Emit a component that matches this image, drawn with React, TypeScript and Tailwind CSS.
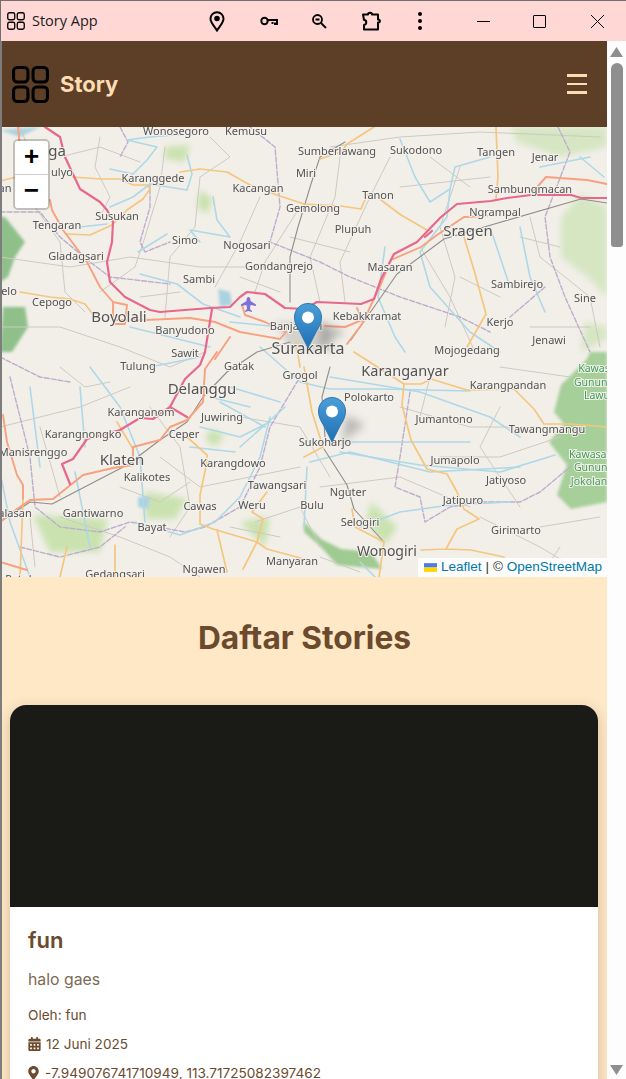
import React from "react";
import { FaCalendarAlt, FaMapMarkerAlt } from "react-icons/fa";

type L = [string, number, number, number?, string?];
const labels: L[] = [
  ["Wonosegoro", 176, 4], ["Kemusu", 246, 4], ["Sumberlawang", 337, 24], ["Sukodono", 416, 23], ["Tangen", 496, 25], ["Jenar", 545, 30],
  ["Karanggede", 153, 51], ["Kacangan", 258, 61], ["Miri", 306, 46], ["Tanon", 378, 68], ["Sambungmacan", 530, 62], ["Gemolong", 313, 81],
  ["Ngrampal", 495, 85], ["Sragen", 468, 104, 15], ["Susukan", 117, 89], ["Tengaran", 57, 98], ["Simo", 185, 113], ["Nogosari", 247, 118],
  ["Plupuh", 353, 102], ["Gladagsari", 76, 129], ["Gondangrejo", 279, 139], ["Masaran", 390, 140], ["Sambi", 199, 152], ["Sambirejo", 517, 157],
  ["Sine", 585, 171], ["elo", 9, 164], ["Cepogo", 52, 175], ["Boyolali", 119, 190, 15], ["Banyudono", 185, 203], ["Kebakkramat", 367, 189],
  ["Kerjo", 500, 195], ["Jenawi", 549, 213], ["Banjarsari", 296, 199], ["Surakarta", 308, 221, 16], ["Mojogedang", 467, 223], ["Sawit", 185, 226],
  ["Tulung", 138, 239], ["Gatak", 239, 239], ["Grogol", 300, 248], ["Karanganyar", 405, 244, 14.5], ["Karangpandan", 508, 258], ["Delanggu", 202, 262, 15],
  ["Polokarto", 369, 270], ["Karanganom", 141, 285], ["Juwiring", 222, 290], ["Jumantono", 444, 292], ["Tawangmangu", 547, 302], ["Karangnongko", 83, 307],
  ["Ceper", 184, 307], ["Manisrenggo", 33, 325], ["Klaten", 122, 333, 15], ["Karangdowo", 233, 336], ["Jumapolo", 455, 333], ["Sukoharjo", 325, 315],
  ["Kalikotes", 147, 350], ["Jatiyoso", 506, 353], ["Tawangsari", 277, 358], ["Nguter", 348, 365], ["Jatipuro", 463, 373], ["Cawas", 200, 379],
  ["Weru", 252, 378], ["Bulu", 312, 378], ["Gantiwarno", 93, 386], ["alasan", 15, 386], ["Selogiri", 360, 395], ["Bayat", 152, 400], ["Girimarto", 516, 403],
  ["Wonogiri", 387, 424, 14], ["Ngawen", 204, 442], ["Manyaran", 292, 434], ["Gedangsari", 115, 447], ["Patuk", 20, 452], ["ga", 57, 24, 15], ["ulyo", 62, 45], ["an", 5, 61],
  ["Kawas", 594, 241, 10.500, "#3f9a55"], ["Gunung", 594, 255, 10.500, "#3f9a55"], ["Lawu", 597, 268, 10.500, "#3f9a55"], ["Kawasan", 591, 327, 10.500, "#3f9a55"], ["Gunung", 594, 340, 10.500, "#3f9a55"], ["Jokolan", 589, 354, 10.500, "#3f9a55"],
];

const pink = [
  "M45 0 L60 10 L65 30 L80 62 L100 75 L107 83 L113 95 L112 115 L107 135 L110 155 L125 170 L150 183 L160 185 L210 181 L230 180 L240 170 L247 165 L265 167 L285 181 L304 182 L317 175 L361 177 L374 172 L381 152 L394 127 L417 115 L441 90 L457 77 L491 74 L507 71 L531 68 L571 68 L581 71 L607 71",
  "M212 182 L205 225 L200 238 L185 252 L170 280 L153 292 L140 291 L120 303 L87 312 L73 332 L62 337 L70 357",
  "M170 280 L187 290",
  "M425 110 L432 104",
];
const salmon = [
  "M18 0 L20 20 M50 73 L52 83 L63 103 L87 135 L100 160 L113 175 L127 178 L125 197 L113 197 L113 175",
  "M113 193 L145 193 L190 191 L215 195 L240 205 L280 212 L286 205 L265 195 L245 188 L242 178",
  "M217 225 L205 242 L203 275 L187 293 L170 300 L160 313 L133 320 L133 338 L113 341 L83 348 L53 372 L30 373 L17 382 L0 395",
  "M347 217 L362 197 L381 157 L391 133 L421 120 L437 108 L464 90 L487 89",
  "M531 67 L546 50 L587 53 L607 57",
  "M3 288 L7 315 L17 348 L23 358 L23 372 M0 435 L27 443",
  "M325 199 L345 200 L362 193 L357 181 M230 210 L215 232",
];
const lightOrange = [
  "M0 54 L25 48 M73 50 L100 52 L120 52 L133 58 L147 58 L150 62 L143 72 L127 83 L112 98 L90 108 L67 107",
  "M180 45 L200 42 L227 45 L250 58 L277 68 L304 77 L341 79 L361 82 L367 68",
  "M381 73 L401 88 L427 103 M374 0 L347 17 L341 25 L320 32",
  "M496 0 L498 50 L496 72 M464 110 L474 143 L486 187 L467 220",
  "M354 225 L404 257 L421 257 L431 252 L467 263 L514 262 L534 282 L544 297 L571 297 L607 300",
  "M404 257 L402 278 L411 313 L427 342 L447 347 L457 365 L464 382 L479 392 L457 402 L446 422 L421 423 M446 422 L471 423 L504 430",
  "M207 335 L200 368 L200 397 L213 402 L257 415 L243 442 M257 415 L267 422 L304 432 M257 415 L263 392 L252 385 L267 365",
  "M117 295 L133 322 M187 310 L207 328 L207 335 M217 403 L227 445 M23 373 L20 450 M115 418 L115 450 M67 420 L60 450",
  "M304 240 L312 285 L323 320 L304 330 M352 382 L355 400 L384 415 L379 450 M296 215 L300 240",
  "M20 165 L50 170 L70 172 L85 177 L95 190",
];
const rail = [
  "M351 213 L397 147 L444 112 L491 98 L581 72 L607 76",
  "M0 395 L30 375 L52 377 L100 352 L127 338 L160 313 L187 295 L203 270 L227 245 L257 225 L290 215",
  "M324 322 L347 358 L354 382 L384 415 M290 175 L290 130 L298 100 L311 57 L320 30 L345 15",
  "M325 310 L322 270 L330 240",
];
const river = [
  "M110 42 L133 47 L147 33 L157 20 L127 13 L150 10 L187 7", "M110 80 L133 70 L150 57 L187 63 L192 47 L187 28", "M80 100 L107 97",
  "M167 107 L138 125", "M213 70 L217 93 L230 110 L190 103 L200 115", "M140 147 L177 157 L203 177 L240 190", "M130 200 L170 210 L210 220",
  "M400 12 L415 50 L430 75 L450 62 L455 40 L490 30", "M450 62 L447 90 L420 125 L430 160 L470 205 L500 225", "M385 120 L378 170 L395 210 L405 225",
  "M490 100 L510 160 M520 100 L530 150 L545 185", "M90 240 L120 280 L140 330 L145 395 M80 260 L85 320 M200 230 L150 240",
  "M40 340 L30 260 M75 345 L90 420", "M0 345 L10 395 L30 450",
  "M135 395 L180 408 L215 395 L240 370 L260 330 L270 290", "M230 260 L280 275 M220 275 L265 300 M240 320 L285 280", "M260 220 L300 255 L330 262 L380 262 L470 264",
  "M350 315 L440 315 L470 315 M340 325 L420 338 L500 345 L555 328", "M310 335 L350 325 L430 345 L520 340", "M330 250 L420 265 L490 290 L520 310", "M307 340 L304 400 M360 400 L400 385 L450 378 L510 375",
  "M580 30 L604 50 M540 40 L590 30", "M360 435 L375 450", "M200 300 L240 310 L270 295 M210 270 L250 280 M190 320 L235 325", "M230 195 L280 200 L320 190",
];
const purple = [
  "M120 0 L128 15 L120 30 M150 55 L150 80 L140 115 L145 125 L170 115", "M0 85 L40 85 L60 110 L90 135 L110 150 L170 157", "M250 0 L275 20 L280 80 L270 115 L320 135 L350 150 L400 170 L460 190 L490 205",
  "M558 0 L570 25 L545 90 L550 130 L565 170 L590 225 M545 160 L510 190", "M10 250 L30 330 L35 380 L60 400 L100 405 L130 395 L185 405 L205 400 L240 380 L260 340 L270 300 L300 250",
  "M0 230 L40 250 L70 255 M20 420 L60 430 L100 420 L125 400", "M410 265 L400 330 L395 360 L420 370 L425 395 L450 380 L480 375 L520 375 L540 365 L570 340",
];
const grey = [
  "M20 0 L40 50 L35 80 L60 115 L65 165 L85 185 M100 10 L95 40 L110 70 L100 90 M165 20 L160 60 L145 110 L135 140 L100 165",
  "M200 50 L195 100 L170 130 L165 190 M260 70 L240 115 L215 160 M300 80 L265 135 L255 165 M340 30 L335 70 L310 130 L320 175",
  "M390 30 L370 70 L340 135 L345 175 M460 40 L440 100 L455 150 L445 200 M530 90 L540 130 L590 170 L600 220 M420 120 L450 170 L475 225",
  "M0 200 L60 200 L120 220 L170 240 L205 225 M0 300 L40 290 L80 280 L130 260 M160 330 L200 360 L250 350 L300 340 M60 390 L120 410 L170 430 L200 450",
  "M400 280 L470 300 L540 300 M440 330 L500 330 L560 310 M320 360 L400 350 L470 380 M480 390 L540 420 L590 450 M240 290 L300 300 L330 350 M530 200 L590 200 M330 20 L400 10 L480 5 L600 10",
  "M0 130 L70 140 L130 130 L200 140 L260 140 M400 60 L490 50 M150 280 L180 320 L190 380 L170 410 M40 300 L60 370 M255 395 L300 380 L320 420 M500 240 L570 250 M540 400 L600 390",
  "M60 240 L85 260 L110 255 M120 360 L160 375 L190 355 M30 390 L35 440 M230 400 L280 410 M320 430 L360 445 M420 290 L430 250 M500 280 L480 320 L520 380 M560 420 L540 450",
  "M60 30 L100 20 L140 35 M210 10 L230 30 L200 50 M290 110 L350 125 M430 30 L470 60 M520 110 L560 120 M460 150 L500 170 M140 170 L180 165 M240 150 L280 165",
];

function Pin({ x, y }: { x: number; y: number }) {
  return (
    <g transform={`translate(${x} ${y})`}>
      <path d="M14 .5C6.500.5.5 6.500.5 14c0 6 2.500 10 5.500 15L14 45l8-16c3-5 5.500-9 5.500-15C27.500 6.500 21.500.5 14 .5Z" fill="url(#pinGrad)" stroke="#2f77ad" strokeWidth="1" />
      <circle cx="14" cy="14.500" r="6" fill="#fff" />
    </g>
  );
}

function GridIcon({ size, sw }: { size: number; sw: number }) {
  return (
    <svg width={size} height={size} viewBox="0 0 36 36" fill="none" stroke="currentColor" strokeWidth={sw} className="shrink-0">
      <rect x="1.500" y="1.500" width="14" height="14" rx="3.500" />
      <rect x="20.500" y="1.500" width="14" height="14" rx="3.500" />
      <rect x="1.500" y="20.500" width="14" height="14" rx="3.500" />
      <rect x="20.500" y="20.500" width="14" height="14" rx="3.500" />
    </svg>
  );
}

function MapArt() {
  return (
    <svg viewBox="0 0 607 450" width="607" height="450" className="block">
      <defs>
        <linearGradient id="pinGrad" x1="0" y1="0" x2="0" y2="1">
          <stop offset="0" stopColor="#4a9fd8" />
          <stop offset="1" stopColor="#1f6fb4" />
        </linearGradient>
        <filter id="soft"><feGaussianBlur stdDeviation="0.45" /></filter>
        <filter id="softer"><feGaussianBlur stdDeviation="1.500" /></filter>
        <filter id="softest"><feGaussianBlur stdDeviation="3" /></filter>
        <filter id="shadow"><feGaussianBlur stdDeviation="4" /></filter>
      </defs>
      <rect width="607" height="450" fill="#f2efe9" />
      <g filter="url(#softest)">
        <path d="M561 90 L581 67 L607 80 L607 170 L587 150 L561 130Z M511 0 L607 0 L607 20 L560 30 L517 15Z M581 225 L607 212 L607 200 L585 195Z" fill="#d6e6c2" />
        <path d="M200 63 L213 72 L207 87 L197 80Z M165 20 L190 18 L185 35 L165 32Z M145 365 L187 372 L175 392 L145 392Z M33 388 L107 392 L100 425 L50 425Z M240 395 L270 390 L265 420Z M371 375 L397 400 L385 418 L366 395Z M210 302 L225 308 L215 320 L205 312Z" fill="#c9e2af" />
        <path d="M275 195 L325 195 L335 225 L290 222Z" fill="#d4d2cd" />
      </g>
      <g filter="url(#softer)">
        <path d="M5 90 L25 115 L15 130 L8 150 L0 155 L0 90Z M3 180 L25 180 L28 200 L12 225 L0 225Z" fill="#8fc08a" />
        <path d="M590 225 L607 225 L607 375 L571 382 L557 368 L567 338 L549 315 L564 297 L554 285 L561 258 L587 232Z" fill="#a6cf99" />
        <path d="M304 395 L321 412 L341 422 L371 425 L382 442 L337 438 L321 420 L304 405Z" fill="#9fca92" />
        <path d="M218 162 L230 165 L232 178 L220 180Z M138 370 L150 370 L148 382 L138 380Z M0 3 L40 0 L20 10Z" fill="#aad3df" />
      </g>
      <g filter="url(#soft)" fill="none" strokeLinejoin="round" strokeLinecap="round">
        {grey.map((d, i) => <path key={i} d={d} stroke="#cdc9c1" strokeWidth="1" />)}
        {purple.map((d, i) => <path key={i} d={d} stroke="#bcadce" strokeWidth="1.400" strokeDasharray="5 2" />)}
        {river.map((d, i) => <path key={i} d={d} stroke="#aed8e8" strokeWidth="1.600" />)}
        {rail.map((d, i) => <path key={i} d={d} stroke="#8e8e8a" strokeWidth="1.100" />)}
        {lightOrange.map((d, i) => <path key={i} d={d} stroke="#f5c67f" strokeWidth="1.700" />)}
        {salmon.map((d, i) => <path key={i} d={d} stroke="#f9a07e" strokeWidth="1.900" />)}
        {pink.map((d, i) => <path key={i} d={d} stroke="#e8688c" strokeWidth="2.200" />)}
      </g>
      <path d="M248.500 170 C250 170 250.500 172 250.500 174 L256 177.500 V179 L250.500 178 L250 182 L252 184 V185 L248.500 184 L245 185 V184 L247 182 L246.500 178 L241 179 V177.500 L246.500 174 C246.500 172 247 170 248.500 170Z" fill="#7f6fd6" />
      <g filter="url(#soft)" fontFamily="'Noto Sans', sans-serif" textAnchor="middle">
        {labels.map(([t, x, y, s, c], i) => (
          <text key={i} x={x} y={y + (s ?? 11) * 0.36} fontSize={s ?? 11} fill={c ?? "#525252"} stroke="#f4f1ec" strokeWidth="2" paintOrder="stroke">{t}</text>
        ))}
      </g>
      <path d="M322 195 L345 205 L318 222Z M346 288 L365 298 L342 315Z" fill="#555" opacity="0.35" filter="url(#shadow)" />
      <Pin x={294} y={176} />
      <Pin x={318} y={270} />
    </svg>
  );
}

export default function App() {
  return (
    <div className="relative h-[1079px] w-[626px] overflow-hidden bg-white font-['Inter',sans-serif]">
      <header className="flex h-[41px] items-center border-t border-l border-[#707070] bg-[#ffd8d6] text-black">
        <div className="ml-[6px] flex items-center"><GridIcon size={18} sw={2.600} /></div>
        <span className="ml-[7px] w-[177px] font-['Open_Sans',sans-serif] text-[14.500px] text-[#1c1c1c]">Story App</span>
        <svg width="16" height="21" viewBox="0 0 16 21" fill="none" stroke="black" strokeWidth="2" className="shrink-0">
          <path d="M8 19.500C5.500 15.500 1.500 11.500 1.500 7.700A6.500 6.500 0 0 1 14.500 7.700C14.500 11.500 10.500 15.500 8 19.500Z" />
          <circle cx="8" cy="7.500" r="1.800" fill="black" />
        </svg>
        <svg width="18" height="11" viewBox="0 0 18 11" fill="none" stroke="black" strokeWidth="2" className="ml-[35px] shrink-0">
          <circle cx="4.500" cy="5" r="3.200" />
          <path d="M8 4H17V8H15V6.500M12.500 8V6" />
        </svg>
        <svg width="15" height="15" viewBox="0 0 15 15" fill="none" stroke="black" strokeWidth="1.800" className="ml-[34px] shrink-0">
          <circle cx="5.500" cy="5.500" r="4.500" />
          <path d="M9 9L14 14M3.500 5.500H7.500" />
        </svg>
        <svg width="20" height="20" viewBox="0 0 20 20" fill="none" stroke="black" strokeWidth="2" strokeLinejoin="round" className="ml-[34px] shrink-0">
          <path d="M2 3.500H7C7 1 11 1 11 3.500H17V8.500C19.500 8.500 19.500 11.500 17 11.500V18.500H3V14C6 13.500 6 9 3 9Z" />
        </svg>
        <div className="ml-[37px] flex w-[4px] flex-col gap-[3px]">
          <span className="h-[4px] w-[4px] rounded-full bg-black" />
          <span className="h-[4px] w-[4px] rounded-full bg-black" />
          <span className="h-[4px] w-[4px] rounded-full bg-black" />
        </div>
        <span className="ml-[55px] h-px w-[13px] bg-black" />
        <span className="ml-[43px] h-[13px] w-[13px] rounded-[1px] border border-black" />
        <svg width="13" height="13" viewBox="0 0 13 13" stroke="black" strokeWidth="1" className="ml-[45px] shrink-0">
          <path d="M0 0L13 13M13 0L0 13" />
        </svg>
      </header>
      <div className="flex h-[1038px]">
        <main className="h-full w-[607px] overflow-hidden border-l-2 border-[#7d7d7d] bg-[#ffe8c6]">
          <nav className="flex h-[86px] items-center justify-between bg-[#5d3e27] pr-[20px] pl-[10px]">
            <div className="flex items-center gap-[11px] text-black">
              <GridIcon size={37} sw={3} />
              <span className="text-[22px] font-bold text-[#fddcb2]">Story</span>
            </div>
            <div className="flex w-[20px] flex-col gap-[6px]">
              <span className="h-[2.500px] bg-[#fddcb2]" />
              <span className="h-[2.500px] bg-[#fddcb2]" />
              <span className="h-[2.500px] bg-[#fddcb2]" />
            </div>
          </nav>
          <section className="relative -ml-[2px] h-[450px] w-[607px] overflow-hidden">
            <MapArt />
            <div className="absolute top-[12px] left-[13px] flex w-[37px] flex-col overflow-hidden rounded-[5px] border-2 border-black/20 bg-clip-padding">
              <div className="flex h-[34px] items-center justify-center border-b border-[#ccc] bg-white font-['Liberation_Mono',monospace] text-[26px] leading-none font-bold text-black">+</div>
              <div className="flex h-[33px] items-center justify-center bg-white font-['Liberation_Mono',monospace] text-[26px] leading-none font-bold text-black">−</div>
            </div>
            <div className="absolute right-0 bottom-0 flex h-[19px] w-[189px] items-center bg-white/85 pl-[6px] font-['Liberation_Sans',sans-serif] text-[13.500px] text-[#333]">
              <svg width="13" height="9" viewBox="0 0 12 8" className="mr-[4px] shrink-0">
                <rect width="12" height="4" fill="#4C7BE1" />
                <rect y="4" width="12" height="4" fill="#FFD500" />
              </svg>
              <span className="text-[#0078a8]">Leaflet</span>
              <span className="mx-[4px]">|</span>
              <span>©&nbsp;</span>
              <span className="text-[#0078a8]">OpenStreetMap</span>
            </div>
          </section>
          <section className="pt-[41px]">
            <h2 className="text-center text-[31.700px] leading-[40px] font-bold text-[#6b4a2e]">Daftar Stories</h2>
            <article className="mt-[47px] ml-[8px] w-[588px] overflow-hidden rounded-[16px] bg-white pb-[40px] shadow-[0_4px_14px_rgba(93,62,39,0.25)]">
              <div className="h-[202px] bg-[#1a1a16]" />
              <div className="px-[18px] pt-[18px]">
                <h3 className="text-[22px] leading-[30px] font-semibold text-[#6b4a2e]">fun</h3>
                <p className="mt-[13px] text-[15.800px] leading-[24px] text-[#7c6a56]">halo gaes</p>
                <p className="mt-[13px] text-[13.600px] leading-[20px] text-[#6b4a2e]">Oleh: fun</p>
                <p className="mt-[9px] flex items-center gap-[5px] text-[13.600px] leading-[20px] text-[#6b4a2e]">
                  <FaCalendarAlt className="h-[14px] w-[13px]" />12 Juni 2025
                </p>
                <p className="mt-[9px] flex items-center gap-[6px] text-[13.600px] leading-[20px] text-[#6b4a2e]">
                  <FaMapMarkerAlt className="h-[14px] w-[11px]" />-7.949076741710949, 113.71725082397462
                </p>
              </div>
            </article>
          </section>
        </main>
        <aside className="flex w-[19px] flex-col items-center bg-[#fdfdfd] pt-[6px]">
          <svg width="13" height="10" viewBox="0 0 13 10" className="shrink-0"><path d="M6.500 0L13 10H0Z" fill="#8f8f8f" /></svg>
          <div className="mt-[6px] h-[184px] w-[12px] rounded-t-[6px] rounded-b-[3px] bg-[#8f8f8f]" />
          <svg width="13" height="10" viewBox="0 0 13 10" className="mt-auto mb-[4px] shrink-0"><path d="M6.500 10L13 0H0Z" fill="#8f8f8f" /></svg>
        </aside>
      </div>
    </div>
  );
}
